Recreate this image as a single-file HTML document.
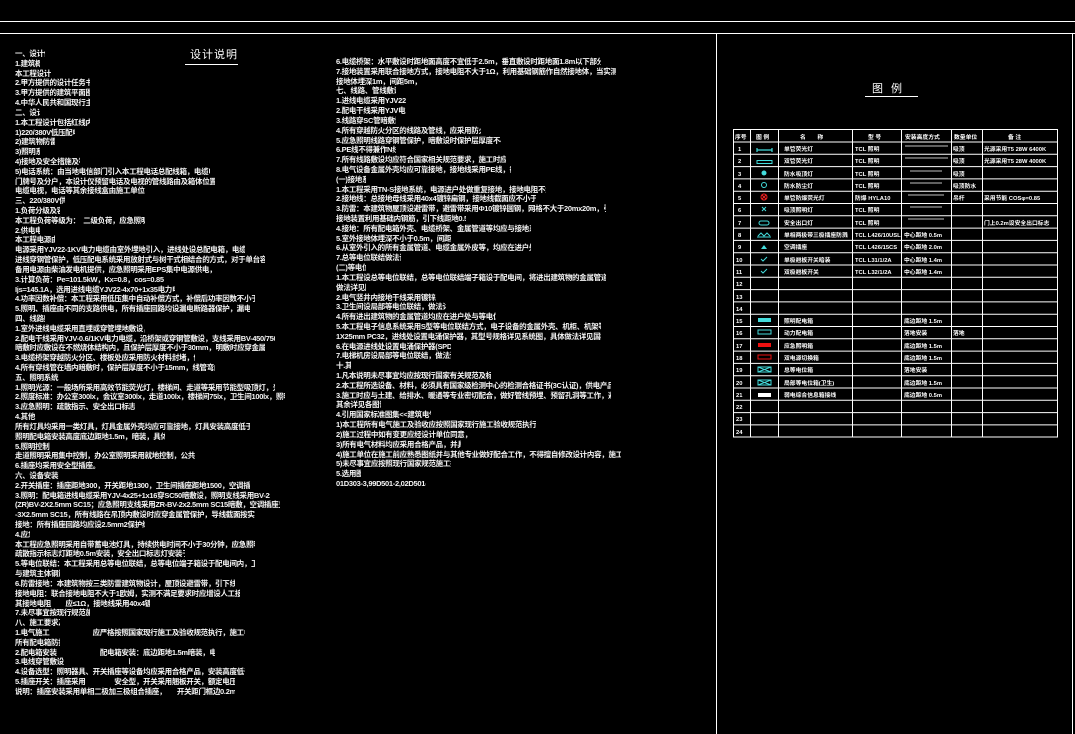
<!DOCTYPE html>
<html><head><meta charset="utf-8"><style>
html,body{margin:0;padding:0;background:#000;width:1075px;height:734px;overflow:hidden;position:relative}
.col{position:absolute;font-family:"Liberation Sans","Noto Sans CJK SC",sans-serif;font-size:7.5px;font-weight:bold;color:#f4f4f4;line-height:9.82px;letter-spacing:-0.3px}
.col div{white-space:nowrap;overflow:hidden;height:9.82px}
.t{position:absolute;font-family:"Liberation Sans","Noto Sans CJK SC",sans-serif;color:#fff;font-size:11px;letter-spacing:1px}
</style></head><body>
<div style="position:absolute;left:0;top:21px;width:1075px;height:1px;background:#fff"></div>
<div style="position:absolute;left:0;top:33px;width:1075px;height:1px;background:#fff"></div>
<div style="position:absolute;left:716px;top:33px;width:1px;height:701px;background:#fff"></div>
<div style="position:absolute;left:1072px;top:33px;width:1px;height:701px;background:#fff"></div>
<div class="t" style="left:190px;top:46px">设计说明</div>
<div style="position:absolute;left:185px;top:64px;width:53px;height:1px;background:#fff"></div>
<div class="t" style="left:872px;top:80px;letter-spacing:8px">图例</div>
<div style="position:absolute;left:865px;top:96px;width:53px;height:1px;background:#fff"></div>

<div class="col" id="L" style="left:15px;top:49px">
<div style="width:30px">一、设计依据设计依据设计依据</div>
<div style="width:25px">1.建筑概况：建筑概况</div>
<div style="width:50px">本工程设计　　专业说明</div>
<div style="width:75px">2.甲方提供的设计任务书及要求说明书；</div>
<div style="width:75px">3.甲方提供的建筑平面图及相关专业资料；</div>
<div style="width:75px">4.中华人民共和国现行主要标准及法规；</div>
<div style="width:25px">二、设计范围</div>
<div style="width:75px">1.本工程设计包括红线内的以下电气系统：</div>
<div style="width:60px">1)220/380V低压配电系统；</div>
<div style="width:40px">2)建筑物防雷系统；</div>
<div style="width:25px">3)照明系统。</div>
<div style="width:65px">4)接地及安全措施及等电位连接；</div>
<div style="width:195px">5)电话系统：由当地电信部门引入本工程电话总配线箱，电缆电视系统、宽带网络由甲方另行委托设计施工及安装有关单位进行</div>
<div style="width:200px">门牌号及分户，本设计仅预留电话及电视的管线路由及箱体位置，由甲方委托专业公司进行施工设计。电源引自本层配电箱</div>
<div style="width:130px">电缆电视，电话等其余接线盒由施工单位按照规范要求施工。</div>
<div style="width:50px">三、220/380V供配电系统</div>
<div style="width:45px">1.负荷分级及容量：</div>
<div style="width:130px">本工程负荷等级为：　二级负荷，应急照明等　三级负荷，其他电力负荷均为三级负荷。</div>
<div style="width:25px">2.供电电源：</div>
<div style="width:40px">本工程电源由室外引来</div>
<div style="width:230px">电源采用YJV22-1KV电力电缆由室外埋地引入，进线处设总配电箱，电缆穿管保护，进户处做重复接地，接地电阻不大于10欧姆</div>
<div style="width:250px">进线穿钢管保护，低压配电系统采用放射式与树干式相结合的方式，对于单台容量较大的负荷或重要负荷采用放射式供电，其余采用树干式</div>
<div style="width:200px">备用电源由柴油发电机提供，应急照明采用EPS集中电源供电，持续供电时间不小于30分钟。</div>
<div style="width:150px">3.计算负荷：Pe=101.5kW，Kx=0.8，cos=0.85，Pjs=81.2kW</div>
<div style="width:160px">Ijs=145.1A，选用进线电缆YJV22-4x70+1x35电力电缆</div>
<div style="width:240px">4.功率因数补偿：本工程采用低压集中自动补偿方式，补偿后功率因数不小于0.90，电容器采用自愈式干式电容器</div>
<div style="width:235px">5.照明、插座由不同的支路供电，所有插座回路均设漏电断路器保护，漏电动作电流30mA，动作时间0.1秒以内</div>
<div style="width:30px">四、线路敷设</div>
<div style="width:130px">1.室外进线电缆采用直埋或穿管埋地敷设，埋深0.7m。</div>
<div style="width:260px">2.配电干线采用YJV-0.6/1KV电力电缆，沿桥架或穿钢管敷设，支线采用BV-450/750V导线穿PC管沿墙、顶板暗敷设。消防线路穿钢管</div>
<div style="width:250px">暗敷时应敷设在不燃烧体结构内，且保护层厚度不小于30mm，明敷时应穿金属管并采取防火保护措施，采用防火涂料。</div>
<div style="width:180px">3.电缆桥架穿越防火分区、楼板处应采用防火材料封堵，做法详见国标图集。</div>
<div style="width:200px">4.所有穿线管在墙内暗敷时，保护层厚度不小于15mm，线管弯曲半径符合规范要求。</div>
<div style="width:70px">五、照明系统</div>
<div style="width:260px">1.照明光源：一般场所采用高效节能荧光灯，楼梯间、走道等采用节能型吸顶灯，光源显色指数Ra大于80，色温应在3300-5300K之间。</div>
<div style="width:270px">2.照度标准：办公室300lx，会议室300lx，走道100lx，楼梯间75lx，卫生间100lx，照明功率密度值满足现行国家标准《建筑照明设计标准》要求。</div>
<div style="width:120px">3.应急照明：疏散指示、安全出口标志。</div>
<div style="width:30px">4.其他</div>
<div style="width:235px">所有灯具均采用一类灯具，灯具金属外壳均应可靠接地，灯具安装高度低于2.4m时应加PE线保护，楼梯间照明采用声光控开关。</div>
<div style="width:150px">照明配电箱安装高度底边距地1.5m，暗装，具体详见系统图。</div>
<div style="width:40px">5.照明控制</div>
<div style="width:180px">走道照明采用集中控制，办公室照明采用就地控制，公共区域照明采用定时控制。</div>
<div style="width:100px">6.插座均采用安全型插座。</div>
<div style="width:60px">六、设备安装</div>
<div style="width:235px">2.开关插座：插座距地300，开关距地1300，卫生间插座距地1500，空调插座距地2200，具体详见图例表</div>
<div style="width:255px">3.照明：配电箱进线电缆采用YJV-4x25+1x16穿SC50暗敷设，照明支线采用BV-2x2.5mm SC15，插座支线采用BV-3x2.5mm SC20暗敷</div>
<div style="width:265px">(ZR)BV-2X2.5mm SC15；应急照明支线采用ZR-BV-2x2.5mm SC15暗敷，空调插座支线采用BV-3x4mm SC20，消防线路采用NH-BV(ZR)BV</div>
<div style="width:240px">-3X2.5mm SC15，所有线路在吊顶内敷设时应穿金属管保护，导线截面按实际负荷选择并满足规范要求</div>
<div style="width:130px">接地：所有插座回路均应设2.5mm2保护线，采用PE线接地方式。</div>
<div style="width:15px">4.应急照明</div>
<div style="width:240px">本工程应急照明采用自带蓄电池灯具，持续供电时间不小于30分钟，应急照明灯具平时处于充电状态，断电时自动点亮，灯具安装。</div>
<div style="width:170px">疏散指示标志灯距地0.5m安装，安全出口标志灯安装于门框上方0.2m处，具体详见平面图。</div>
<div style="width:240px">5.等电位联结：本工程采用总等电位联结，总等电位端子箱设于配电间内，卫生间设局部等电位联结，做法详见国标图集02D501-2。</div>
<div style="width:45px">与建筑主体钢筋相连。</div>
<div style="width:220px">6.防雷接地：本建筑物按三类防雷建筑物设计，屋顶设避雷带，引下线利用柱内主筋，接地采用联合接地</div>
<div style="width:225px">接地电阻：联合接地电阻不大于1欧姆，实测不满足要求时应增设人工接地极，接地装置应与等电位联结可靠连接，做法详见图集。</div>
<div style="width:135px">其接地电阻　　应≤1Ω，接地线采用40x4镀锌扁钢连接，接地电阻小于1Ω。</div>
<div style="width:75px">7.未尽事宜按现行规范施工，详见m。</div>
<div style="width:45px">八、施工要求及说明：</div>
<div style="width:230px">1.电气施工　　　　　　应严格按照国家现行施工及验收规范执行，施工中应与土建及其它专业密切配合，做好预留预埋工作，由厂家配套提供。</div>
<div style="width:45px">所有配电箱防护等级IP3X。</div>
<div style="width:200px">2.配电箱安装　　　　　　配电箱安装：底边距地1.5m暗装，电气竖井内明装，具体详见系统图说明。</div>
<div style="width:115px">3.电线穿管敷设　　　　　　　　　暗敷，明敷，详见平面。</div>
<div style="width:230px">4.设备选型：照明器具、开关插座等设备均应采用合格产品，安装高度低于2.4m的灯具应加PE保护线，所有设备应有3C认证。</div>
<div style="width:220px">5.插座开关：插座采用　　　　安全型，开关采用翘板开关，额定电压250V,10A，卫生间插座采用防水防溅型，选用防护等级</div>
<div style="width:220px">说明：插座安装采用单相二极加三极组合插座，　　开关距门框边0.2m，开关底边距地1.3m，插座距地0.3m。</div>
</div>

<div class="col" id="M" style="left:336px;top:57px">
<div style="width:265px">6.电缆桥架：水平敷设时距地面高度不宜低于2.5m，垂直敷设时距地面1.8m以下部分应加金属盖板保护，桥架接地应可靠连续。</div>
<div style="width:280px">7.接地装置采用联合接地方式，接地电阻不大于1Ω，利用基础钢筋作自然接地体，当实测接地电阻不满足要求时，应增设人工接地极及接地线(做法)，</div>
<div style="width:85px">接地体埋深1m，间距5m，敷设5m。</div>
<div style="width:60px">七、线路、管线敷设说明</div>
<div style="width:70px">1.进线电缆采用YJV22电力电缆</div>
<div style="width:70px">2.配电干线采用YJV电力电缆；</div>
<div style="width:60px">3.线路穿SC管暗敷设；</div>
<div style="width:145px">4.所有穿越防火分区的线路及管线，应采用防火封堵材料进行封堵处理。</div>
<div style="width:165px">5.应急照明线路穿钢管保护，暗敷设时保护层厚度不小于30mm，明敷时涂防火涂料。</div>
<div style="width:60px">6.PE线不得兼作N线。</div>
<div style="width:170px">7.所有线路敷设均应符合国家相关规范要求，施工时应配合土建做好预埋工作。</div>
<div style="width:175px">8.电气设备金属外壳均应可靠接地，接地线采用PE线，截面按规范要求选择。</div>
<div style="width:30px">(一)接地系统</div>
<div style="width:210px">1.本工程采用TN-S接地系统，电源进户处做重复接地，接地电阻不大于1欧姆，利用建筑物基础作接地体，接地母线引至总配电箱。</div>
<div style="width:200px">2.接地线：总接地母线采用40x4镀锌扁钢，接地线截面应不小于相线截面，且不小于25mm2及4mm2x50mm。</div>
<div style="width:270px">3.防雷：本建筑物屋顶设避雷带，避雷带采用Φ10镀锌圆钢，网格不大于20mx20m，引下线利用柱内两根主筋，间距不大于25m，上下焊接连通。</div>
<div style="width:130px">接地装置利用基础内钢筋，引下线距地0.5m处设断接卡。</div>
<div style="width:195px">4.接地：所有配电箱外壳、电缆桥架、金属管道等均应与接地系统可靠连接形成等电位。</div>
<div style="width:115px">5.室外接地体埋深不小于0.5m，间距5m。</div>
<div style="width:195px">6.从室外引入的所有金属管道、电缆金属外皮等，均应在进户处与接地装置相连接。</div>
<div style="width:65px">7.总等电位联结做法详见图集</div>
<div style="width:30px">(二)等电位联结</div>
<div style="width:270px">1.本工程设总等电位联结，总等电位联结端子箱设于配电间，将进出建筑物的金属管道、建筑物金属构件及PE干线等连接在一起，端子箱距地0.3m安装。</div>
<div style="width:30px">做法详见图集</div>
<div style="width:100px">2.电气竖井内接地干线采用镀锌扁钢</div>
<div style="width:110px">3.卫生间设局部等电位联结，做法详见。</div>
<div style="width:160px">4.所有进出建筑物的金属管道均应在进户处与等电位端子连接。</div>
<div style="width:265px">5.本工程电子信息系统采用S型等电位联结方式，电子设备的金属外壳、机柜、机架等均应与等电位连接网络可靠连接，导体截面不小于</div>
<div style="width:265px">1X25mm PC32，进线处设置电涌保护器，其型号规格详见系统图，具体做法详见国标图集《等电位联结安装》02D501-2>>。</div>
<div style="width:115px">6.在电源进线处设置电涌保护器(SPD)</div>
<div style="width:115px">7.电梯机房设局部等电位联结，做法详见。</div>
<div style="width:15px">十.其它</div>
<div style="width:155px">1.凡本说明未尽事宜均应按现行国家有关规范及标准执行施工。</div>
<div style="width:275px">2.本工程所选设备、材料，必须具有国家级检测中心的检测合格证书(3C认证)，供电产品、消防产品应具有入网许可证，满足与产品相关的国家标准。</div>
<div style="width:275px">3.施工时应与土建、给排水、暖通等专业密切配合，做好管线预埋、预留孔洞等工作，避免遗漏，施工中如发现问题应及时与设计单位联系，协调解决。</div>
<div style="width:45px">其余详见各图说明。</div>
<div style="width:95px">4.引用国家标准图集<<建筑电气工程施工>></div>
<div style="width:200px">1)本工程所有电气施工及验收应按照国家现行施工验收规范执行，施工前应仔细阅读图纸及说明。</div>
<div style="width:135px">2)施工过程中如有变更应经设计单位同意，签字，盖章。</div>
<div style="width:125px">3)所有电气材料均应采用合格产品，并具备相关合格证书</div>
<div style="width:285px">4)施工单位在施工前应熟悉图纸并与其他专业做好配合工作，不得擅自修改设计内容，施工中如发现设计文件有误应及时与设计单位联系，并及时处理。</div>
<div style="width:115px">5)未尽事宜应按照现行国家规范施工执行。</div>
<div style="width:25px">5.选用图集</div>
<div style="width:90px">01D303-3,99D501-2,02D501-2等。</div>
</div>

<svg width="1075" height="734" style="position:absolute;left:0;top:0" font-family="Liberation Sans, Noto Sans CJK SC, sans-serif" font-weight="bold">
<g stroke="#fff" stroke-width="1" fill="none">
<rect x="733.5" y="129.5" width="324" height="307.5"/>
<path d="M750.5 129.5V437M778.5 129.5V437M852.5 129.5V437M901.5 129.5V437M951.5 129.5V437M982.5 129.5V437"/>
<path d="M733.5 142H1058M733.5 154.3H1058M733.5 166.6H1058M733.5 178.9H1058M733.5 191.2H1058M733.5 203.5H1058M733.5 215.8H1058M733.5 228.1H1058M733.5 240.4H1058M733.5 252.7H1058M733.5 265H1058M733.5 277.3H1058M733.5 289.6H1058M733.5 301.9H1058M733.5 314.2H1058M733.5 326.5H1058M733.5 338.8H1058M733.5 351.1H1058M733.5 363.4H1058M733.5 375.7H1058M733.5 388H1058M733.5 400.3H1058M733.5 412.6H1058M733.5 424.9H1058"/>
</g>
<g fill="#fff" font-size="5.8">
<text x="735" y="139">序号</text><text x="756" y="139">图 例</text><text x="800" y="139">名　　称</text><text x="868" y="139">型 号</text><text x="905" y="139">安装高度方式</text><text x="954" y="139">数量单位</text><text x="1008" y="139">备 注</text>
<text x="738" y="151">1</text><text x="738" y="163">2</text><text x="738" y="176">3</text><text x="738" y="188">4</text><text x="738" y="200">5</text><text x="738" y="212">6</text><text x="738" y="225">7</text><text x="738" y="237">8</text><text x="738" y="249">9</text><text x="736" y="262">10</text><text x="736" y="274">11</text><text x="736" y="286">12</text><text x="736" y="299">13</text><text x="736" y="311">14</text><text x="736" y="323">15</text><text x="736" y="335">16</text><text x="736" y="348">17</text><text x="736" y="360">18</text><text x="736" y="372">19</text><text x="736" y="385">20</text><text x="736" y="397">21</text><text x="736" y="409">22</text><text x="736" y="421">23</text><text x="736" y="434">24</text>
<text x="784" y="151">单管荧光灯</text><text x="784" y="163">双管荧光灯</text><text x="784" y="176">防水吸顶灯</text><text x="784" y="188">防水防尘灯</text><text x="784" y="200">单管防爆荧光灯</text><text x="784" y="212">吸顶照明灯</text><text x="784" y="225">安全出口灯</text><text x="784" y="237">单相两极带三极插座防溅</text><text x="784" y="249">空调插座</text><text x="784" y="262">单极翘板开关暗装</text><text x="784" y="274">双极翘板开关</text>
<text x="784" y="323">照明配电箱</text><text x="784" y="335">动力配电箱</text><text x="784" y="348">应急照明箱</text><text x="784" y="360">双电源切换箱</text><text x="784" y="372">总等电位箱</text><text x="784" y="385">局部等电位箱(卫生)</text><text x="784" y="397">弱电综合信息箱接线</text>
<text x="855" y="151">TCL 照明</text><text x="855" y="163">TCL 照明</text><text x="855" y="176">TCL 照明</text><text x="855" y="188">TCL 照明</text><text x="855" y="200">防爆 HYLA10</text><text x="855" y="212">TCL 照明</text><text x="855" y="225">TCL 照明</text><text x="855" y="237">TCL L426/10USL</text><text x="855" y="249">TCL L426/15CS</text><text x="855" y="262">TCL L31/1/2A</text><text x="855" y="274">TCL L32/1/2A</text>
<text x="904" y="237">中心距地 0.5m</text><text x="904" y="249">中心距地 2.0m</text><text x="904" y="262">中心距地 1.4m</text><text x="904" y="274">中心距地 1.4m</text>
<text x="904" y="323">底边距地 1.5m</text><text x="904" y="335">落地安装</text><text x="904" y="348">底边距地 1.5m</text><text x="904" y="360">底边距地 1.5m</text><text x="904" y="372">落地安装</text><text x="904" y="385">底边距地 1.5m</text><text x="904" y="397">底边距地 0.5m</text>
<text x="953" y="151">吸顶</text><text x="953" y="163">吸顶</text><text x="953" y="176">吸顶</text><text x="953" y="188">吸顶防水</text><text x="953" y="200">吊杆</text><text x="953" y="335">落地</text>
<text x="984" y="151">光源采用T5 28W 6400K</text><text x="984" y="163">光源采用T5 28W 4000K</text><text x="984" y="200">采用节能 COSφ=0.85</text><text x="984" y="225">门上0.2m设安全出口标志</text>
</g>
<g stroke="#fff" stroke-width="0.8" fill="none">
<path d="M905 146H948M905 158H948M910 171H942M910 183H942M908 195H944M910 207H942M908 219H944"/>
</g>
<g font-size="0">
<path d="M757 150H772M757 148v4M772 148v4" stroke="#4dd" stroke-width="1.2"/>
<rect x="757" y="160.5" width="15" height="3" fill="none" stroke="#4dd"/>
<circle cx="764" cy="173" r="2.5" fill="#4dd"/>
<circle cx="764" cy="185" r="2.5" fill="none" stroke="#4dd"/>
<circle cx="764" cy="197" r="3" fill="none" stroke="#e22"/><path d="M762 195l4 4M766 195l-4 4" stroke="#e22"/>
<path d="M762 207l4 4M766 207l-4 4" stroke="#4dd"/>
<rect x="759" y="221" width="10" height="4" rx="2" fill="none" stroke="#4dd"/>
<path d="M758 236l3-3 3 3 3-3 3 3M757 237H771" stroke="#4dd" fill="none"/>
<path d="M761 249l3-4 3 4z" fill="#4dd"/>
<path d="M761 259l2 2 4-4" stroke="#4dd" fill="none"/>
<path d="M761 271l2 2 4-4" stroke="#4dd" fill="none"/>
<rect x="758" y="318" width="13" height="4" fill="#4dd"/>
<rect x="758" y="330" width="13" height="4" fill="none" stroke="#4dd"/>
<rect x="758" y="343" width="13" height="4" fill="#e11"/>
<rect x="758" y="355" width="13" height="4" fill="none" stroke="#e11"/>
<rect x="758" y="367" width="13" height="5" fill="none" stroke="#4dd"/><path d="M758 367l13 5M771 367l-13 5" stroke="#4dd"/>
<rect x="758" y="380" width="13" height="5" fill="none" stroke="#4dd"/><path d="M758 380l13 5M771 380l-13 5" stroke="#4dd"/>
<rect x="758" y="393" width="13" height="4" fill="#fff"/>
</g>
</svg>
</body></html>
